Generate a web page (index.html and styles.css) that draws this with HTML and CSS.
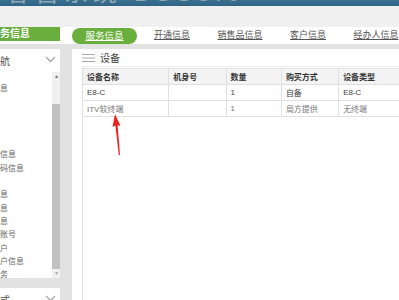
FILE: index.html
```html
<!DOCTYPE html>
<html lang="zh-CN">
<head>
    <meta charset="UTF-8">
    <title>设备信息</title>
    <link rel="stylesheet" href="styles.css">
</head>
<body>
    <div class="topbar"><span class="sys-title">客售系统 BSS3.0</span></div>
    <div class="subbar"></div>
    <div class="tabrow">
        <div class="side-title">务信息</div>
        <div class="tabs">
            <a class="tab active">服务信息</a>
            <a class="tab">开通信息</a>
            <a class="tab">销售品信息</a>
            <a class="tab">客户信息</a>
            <a class="tab">经办人信息</a>
        </div>
    </div>
    <div class="layout">
        <div class="sidebar">
            <div class="nav-box">
                <div class="nav-head">
                    <span>航</span>
                    <svg class="chev" width="11" height="7" viewBox="0 0 11 7"><path d="M1 1 L5.5 5.5 L10 1" fill="none" stroke="#aaa" stroke-width="1.4"/></svg>
                </div>
                <div class="nav-body">
                    <ul class="nav-list">
                        <li>息</li>
                        <li></li>
                        <li></li>
                        <li></li>
                        <li></li>
                        <li>信息</li>
                        <li>码信息</li>
                        <li></li>
                        <li>息</li>
                        <li>息</li>
                        <li>息</li>
                        <li>账号</li>
                        <li>户</li>
                        <li>户信息</li>
                        <li>务</li>
                    </ul>
                    <div class="scrollbar">
                        <div class="sb-arrow">&#9652;</div>
                        <div class="sb-track"><div class="sb-thumb"></div></div>
                        <div class="sb-arrow">&#9662;</div>
                    </div>
                </div>
            </div>
            <div class="nav-box second">
                <div class="nav-head">
                    <span>式</span>
                    <svg class="chev" width="11" height="7" viewBox="0 0 11 7"><path d="M1 1 L5.5 5.5 L10 1" fill="none" stroke="#aaa" stroke-width="1.4"/></svg>
                </div>
            </div>
        </div>
        <div class="main">
            <div class="panel-head">
                <svg width="13" height="8" viewBox="0 0 13 8"><path d="M0 0.5 H13 M0 4 H13 M0 7.5 H13" stroke="#aaa" stroke-width="1"/></svg>
                <span>设备</span>
            </div>
            <div class="panel-body">
                <table class="grid">
                    <tr>
                        <th class="c1">设备名称</th>
                        <th class="c2">机身号</th>
                        <th class="c3">数量</th>
                        <th class="c4">购买方式</th>
                        <th class="c5">设备类型</th>
                    </tr>
                    <tr>
                        <td>E8-C</td>
                        <td></td>
                        <td>1</td>
                        <td>自备</td>
                        <td>E8-C</td>
                    </tr>
                    <tr class="light">
                        <td>ITV软终端</td>
                        <td></td>
                        <td>1</td>
                        <td>局方提供</td>
                        <td>无终端</td>
                    </tr>
                </table>
            </div>
        </div>
    </div>
    <svg class="arrow" width="20" height="48" viewBox="0 0 20 48">
        <path d="M7 1 L12.5 13 L9.6 12 L12 42 L10.8 42 L7.4 12.5 L4.5 14 Z" fill="#f0201a"/>
    </svg>
</body>
</html>
```

FILE: styles.css
```css
body {
    margin: 0;
    width: 399px;
    height: 300px;
    overflow: hidden;
    position: relative;
    font-family: "Liberation Sans", "Noto Sans CJK SC", sans-serif;
    background-color: #e2e2e2;
    color: #333;
}
.topbar {
    display: flow-root;
    height: 6px;
    overflow: hidden;
    background: linear-gradient(to bottom, #3a6f90, #2f6584);
}
.sys-title {
    display: block;
    margin-top: -19px;
    padding-left: 6px;
    font-size: 24px;
    line-height: 24px;
    letter-spacing: 5px;
    color: #8ea6b6;
    white-space: nowrap;
}
.subbar {
    height: 21px;
    background-color: #f0f0f0;
}
.tabrow {
    display: flex;
    height: 17px;
    overflow: hidden;
    background-color: #fff;
}
.side-title {
    flex-shrink: 0;
    width: 60px;
    height: 14px;
    background-color: #6aaf3d;
    color: #fff;
    font-size: 10px;
    font-weight: bold;
    line-height: 14px;
}
.tabs {
    display: flex;
    flex-shrink: 0;
    margin-left: 12px;
    padding-top: 1px;
}
.tab {
    flex-shrink: 0;
    width: 68px;
    text-align: center;
    font-size: 9px;
    line-height: 15px;
    color: #555;
    text-decoration: underline;
}
.tab.active {
    width: 65px;
    margin-right: 1px;
    background-color: #6aaf3d;
    color: #fff;
    font-size: 9.5px;
    border-radius: 8px;
}
.layout {
    display: flex;
    padding-top: 5px;
}
.sidebar {
    flex-shrink: 0;
    width: 60px;
    display: flex;
    flex-direction: column;
    gap: 10px;
}
.nav-box {
    background-color: #fff;
    height: 229px;
}
.nav-box.second {
    height: 20px;
}
.nav-head {
    display: flex;
    justify-content: space-between;
    align-items: center;
    height: 23px;
    padding-right: 4px;
    font-size: 10px;
    color: #555;
}
.nav-head .chev {
    margin-top: -2px;
}
.nav-body {
    display: flex;
    height: 206px;
}
.nav-list {
    list-style: none;
    margin: 0;
    padding: 10px 0 0 0;
    width: 52px;
    font-size: 8px;
    color: #666;
}
.nav-list li {
    height: 13.3px;
    line-height: 13px;
}
.scrollbar {
    width: 8px;
    display: flex;
    flex-direction: column;
    background-color: #f0f0f0;
}
.sb-arrow {
    height: 9px;
    font-size: 6px;
    line-height: 9px;
    text-align: center;
    color: #777;
}
.sb-arrow:last-child {
    color: #aaa;
}
.sb-track {
    flex: 1;
    padding-top: 23px;
    display: flex;
}
.sb-thumb {
    flex: 1;
    background-color: #c1c1c1;
}
.main {
    flex: 1;
    margin-left: 12px;
    background-color: #fff;
    height: 251px;
}
.panel-head {
    display: flex;
    align-items: center;
    gap: 5px;
    height: 17px;
    margin-left: 10px;
    border-bottom: 1px solid #eaeaea;
    font-size: 10px;
    color: #444;
}
.panel-head svg {
    margin-top: 1px;
}
.panel-body {
    margin-left: 10px;
    padding-top: 1px;
    border-left: 1px solid #e4e4e4;
    height: 232px;
}
.grid {
    border-collapse: collapse;
    width: 330px;
    margin-left: -1px;
    font-size: 8px;
}
.grid th,
.grid td {
    height: 15px;
    padding: 0 0 0 4px;
    border: 1px solid #e0e0e0;
    text-align: left;
}
.grid th {
    background-color: #f3f3f3;
    font-weight: bold;
    color: #333;
}
.grid td {
    color: #444;
}
.grid tr.light td {
    color: #777;
}
.c1 { width: 84px; }
.c2 { width: 54px; }
.c3 { width: 52px; }
.c4 { width: 54px; }
.c5 { width: 70px; }
.arrow {
    position: absolute;
    left: 108px;
    top: 113px;
}
```
